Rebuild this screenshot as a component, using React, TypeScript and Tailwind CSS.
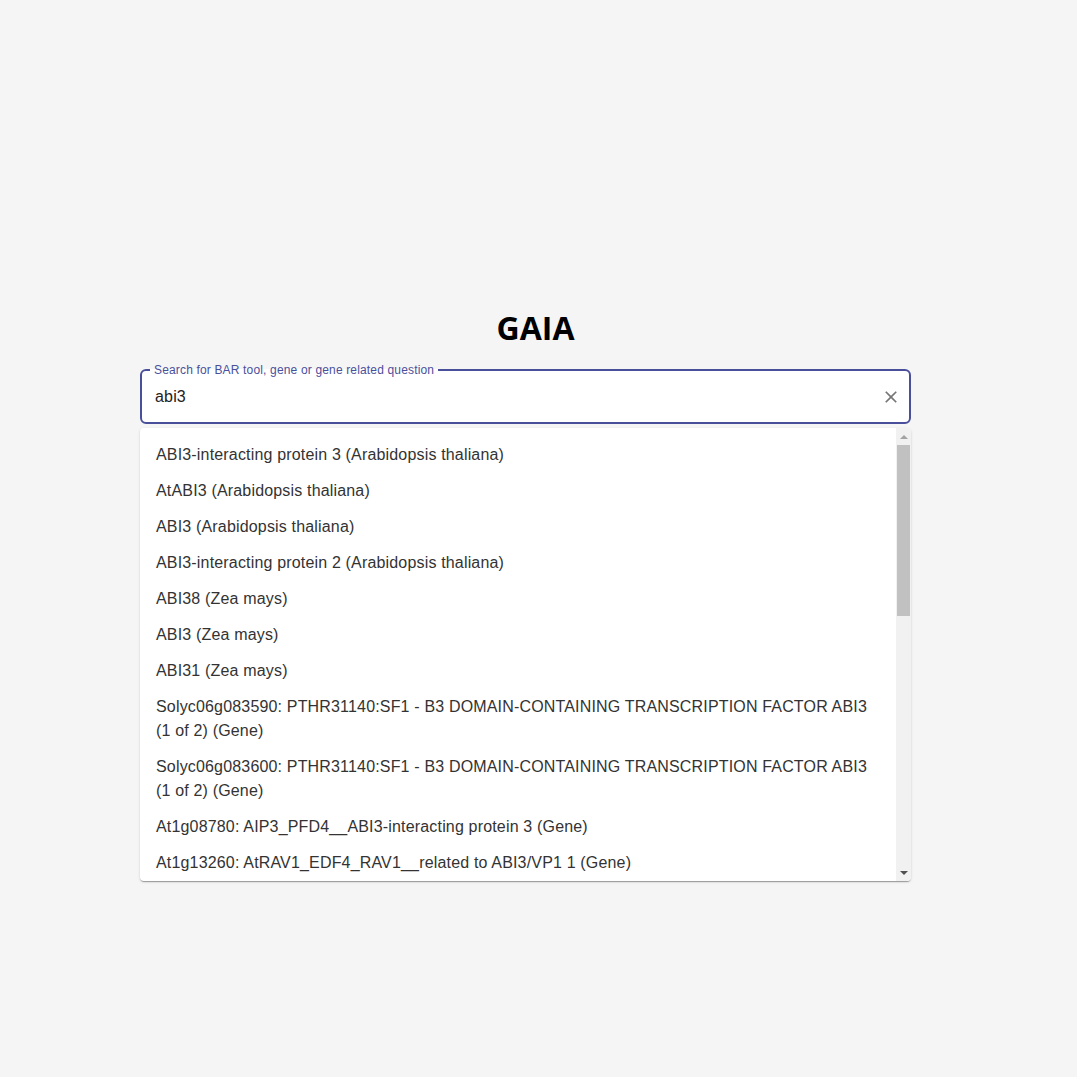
import React from "react";

const items = [
  "ABI3-interacting protein 3 (Arabidopsis thaliana)",
  "AtABI3 (Arabidopsis thaliana)",
  "ABI3 (Arabidopsis thaliana)",
  "ABI3-interacting protein 2 (Arabidopsis thaliana)",
  "ABI38 (Zea mays)",
  "ABI3 (Zea mays)",
  "ABI31 (Zea mays)",
  "Solyc06g083590: PTHR31140:SF1 - B3 DOMAIN-CONTAINING TRANSCRIPTION FACTOR ABI3 (1 of 2) (Gene)",
  "Solyc06g083600: PTHR31140:SF1 - B3 DOMAIN-CONTAINING TRANSCRIPTION FACTOR ABI3 (1 of 2) (Gene)",
  "At1g08780: AIP3_PFD4__ABI3-interacting protein 3 (Gene)",
  "At1g13260: AtRAV1_EDF4_RAV1__related to ABI3/VP1 1 (Gene)",
];

export default function App() {
  return (
    <div className="min-h-[1077px] w-full bg-[#f5f5f5]" style={{ fontFamily: '"Liberation Sans", Arial, sans-serif' }}>
      <div className="flex flex-col pt-[309px]">
        <h1
          className="h-[38px] text-center text-[32px] leading-[38px] font-bold text-black"
          style={{ fontFamily: '"Open Sans", "DejaVu Sans", sans-serif' }}
        >
          <span className="relative left-[-3px]">GAIA</span>
        </h1>
        <div className="ml-[140px] mt-[17px] w-[771px]">
          <fieldset className="h-[60px] rounded-[6px] border-2 border-[#4a4f9c] bg-white flex items-center">
            <legend className="ml-[8px] px-[4px] text-[12px] leading-[12px] tracking-[0.16px] text-[#4a4f9c]">
              Search for BAR tool, gene or gene related question
            </legend>
            <div className="flex w-full items-center pl-[13px] pr-[8px] pb-[4px] h-[44px]">
              <div className="flex-1 text-[16px] tracking-[0.17px] text-[#222]">abi3</div>
              <svg width="20" height="20" viewBox="0 0 24 24" fill="#757575">
                <path d="M19 6.41 17.59 5 12 10.59 6.41 5 5 6.41 10.59 12 5 17.59 6.41 19 12 13.41 17.59 19 19 17.59 13.41 12z" />
              </svg>
            </div>
          </fieldset>
          <div className="mt-[4px] flex h-[453px] overflow-hidden rounded-[4px] bg-white shadow-[0_2px_1px_-1px_rgba(0,0,0,0.2),0_1px_1px_0_rgba(0,0,0,0.14),0_1px_3px_0_rgba(0,0,0,0.12)]">
            <ul className="flex-1 overflow-hidden pt-[9px]">
              {items.map((t, i) => (
                <li key={i} className="px-4 py-[6px] text-[16px] leading-6 tracking-[0.17px] text-[#333]">
                  {t}
                </li>
              ))}
            </ul>
            <div className="flex w-[15px] flex-col bg-[#f1f1f1]">
              <div className="flex h-[17px] items-center justify-center">
                <div className="h-0 w-0 border-x-[4px] border-b-[4px] border-x-transparent border-b-[#a3a3a3]" />
              </div>
              <div className="mx-[1px] h-[171px] bg-[#c1c1c1]" />
              <div className="flex-1" />
              <div className="flex h-[17px] items-center justify-center">
                <div className="h-0 w-0 border-x-[4px] border-t-[4px] border-x-transparent border-t-[#505050]" />
              </div>
            </div>
          </div>
        </div>
      </div>
    </div>
  );
}
